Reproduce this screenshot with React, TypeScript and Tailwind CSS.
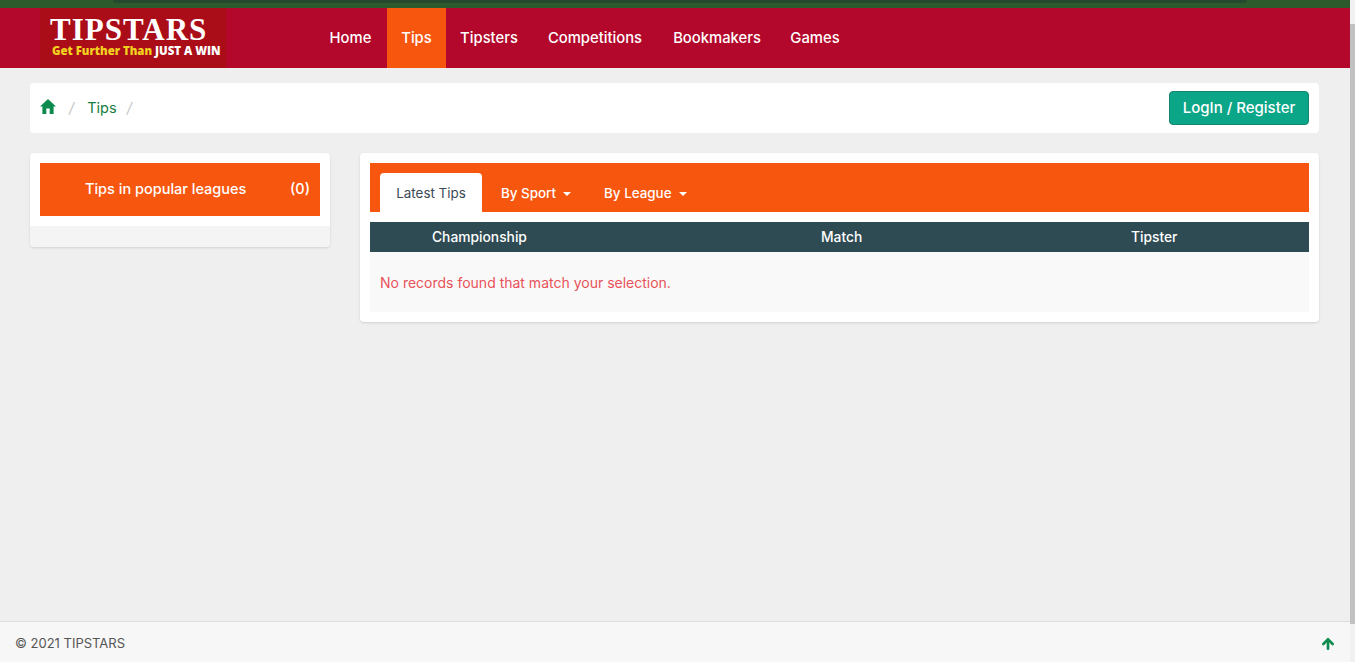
import { ArrowUp } from "lucide-react";

const font = "font-['Inter','Liberation_Sans',sans-serif]";

function HomeIcon() {
	return (
		<svg viewBox="0 0 16 15" className="w-4 h-[15px] mb-[3px]" fill="#0d8a4e">
			<path d="M8 0 L16 7.5 H13.6 V15 H9.7 V9.6 H6.3 V15 H2.4 V7.5 H0 Z" />
		</svg>
	);
}

function Logo() {
	return (
		<div className="w-[186px] h-[60px] bg-[#ab0d18] flex flex-col pt-[8px]">
			<span className="font-['Liberation_Serif',serif] font-bold text-white text-[31px] leading-[27px] tracking-[1px] pl-[10px]">TIPSTARS</span>
			<span className="font-['Open_Sans',sans-serif] font-extrabold text-[11.4px] leading-[16px] pl-[12px] whitespace-nowrap">
				<span className="text-[#f2d21f]">Get Further Than </span>
				<span className="text-white">JUST A WIN</span>
			</span>
		</div>
	);
}

function NavItem({ label, width, active }: { label: string; width: string; active?: boolean }) {
	return (
		<a className={`h-[60px] pt-[1px] flex items-center justify-center text-white text-[14.8px] font-medium ${width} ${active ? "bg-[#f7560e]" : ""}`}>
			{label}
		</a>
	);
}

function Caret() {
	return <span className="inline-block ml-[7px] align-middle border-x-4 border-x-transparent border-t-4 border-t-white" />;
}

export default function App() {
	return (
		<div className={`${font} h-[662px] overflow-hidden flex bg-[#efefef]`}>
			<div className="flex-1 flex flex-col min-w-0">
				<div className="h-2 bg-[#2c5a2c] pl-[113px] pr-[103px]">
					<div className="h-[3px] bg-[#26482f] rounded-b" />
				</div>
				<header className="h-[60px] bg-[#b3072b] flex pl-10">
					<Logo />
					<nav className="flex ml-[88px]">
						<NavItem label="Home" width="w-[73px]" />
						<NavItem label="Tips" width="w-[59px]" active />
						<NavItem label="Tipsters" width="w-[86px]" />
						<NavItem label="Competitions" width="w-[126px]" />
						<NavItem label="Bookmakers" width="w-[118px]" />
						<NavItem label="Games" width="w-[78px]" />
					</nav>
				</header>

				<main className="flex-1 px-[30px] pt-[15px] pr-[31px]">
					<div className="h-[50px] bg-white rounded flex items-center justify-between px-[10px]">
						<div className="flex items-center text-[14.5px] text-[#17803f] pb-[1px]">
							<HomeIcon />
							<span className="text-[#c4c4c4] mx-[13px] italic">/</span>
							<span>Tips</span>
							<span className="text-[#c4c4c4] ml-[10px] italic">/</span>
						</div>
						<button className="w-[140px] h-[34px] bg-[#0ba588] border border-[#148571] rounded text-white text-[15px] font-medium">
							LogIn / Register
						</button>
					</div>

					<div className="flex gap-[30px] mt-5 items-start">
						<aside className="w-[300px] bg-white rounded shadow-sm">
							<div className="p-[10px]">
								<div className="h-[53px] bg-[#f7560e] flex items-center justify-between pl-[45px] pr-[10px] pb-[1px] text-white text-[14.5px] font-medium">
									<span>Tips in popular leagues</span>
									<span>(0)</span>
								</div>
							</div>
							<div className="h-[21px] bg-[#f4f4f4] rounded-b" />
						</aside>

						<section className="flex-1 bg-white rounded shadow-sm p-[10px]">
							<div className="h-[49px] bg-[#f7560e] flex items-end pl-[10px] text-[13.4px]">
								<div className="h-[39px] w-[102px] pt-[2px] bg-white rounded-t flex items-center justify-center text-[#3b4a55]">Latest Tips</div>
								<div className="h-[39px] pt-[2px] flex items-center text-white font-medium ml-[19px]">By Sport<Caret /></div>
								<div className="h-[39px] pt-[2px] flex items-center text-white font-medium ml-[33px]">By League<Caret /></div>
							</div>
							<div className="h-[30px] mt-[10px] pt-[1px] bg-[#2e4a52] text-white text-[13.8px] font-medium flex items-center">
								<span className="w-[451px] pl-[62px]">Championship</span>
								<span className="w-[310px]">Match</span>
								<span>Tipster</span>
							</div>
							<div className="h-[60px] bg-[#f9f9f9] flex items-center px-[10px] text-[14px] text-[#e8525a]">
								No records found that match your selection.
							</div>
						</section>
					</div>
				</main>

				<footer className="h-[41px] pt-[3px] bg-[#f7f7f7] border-t border-[#dddddd] flex items-center justify-between pl-[15px] pr-[14px] text-[13px] text-[#555555]">
					<span>© 2021 TIPSTARS</span>
					<ArrowUp size={16} strokeWidth={4} className="text-[#0d8a4e]" />
				</footer>
			</div>
			<div className="w-[5px] bg-[#f1f1f1] pt-6">
				<div className="h-[600px] bg-[#c1c1c1]" />
			</div>
		</div>
	);
}
